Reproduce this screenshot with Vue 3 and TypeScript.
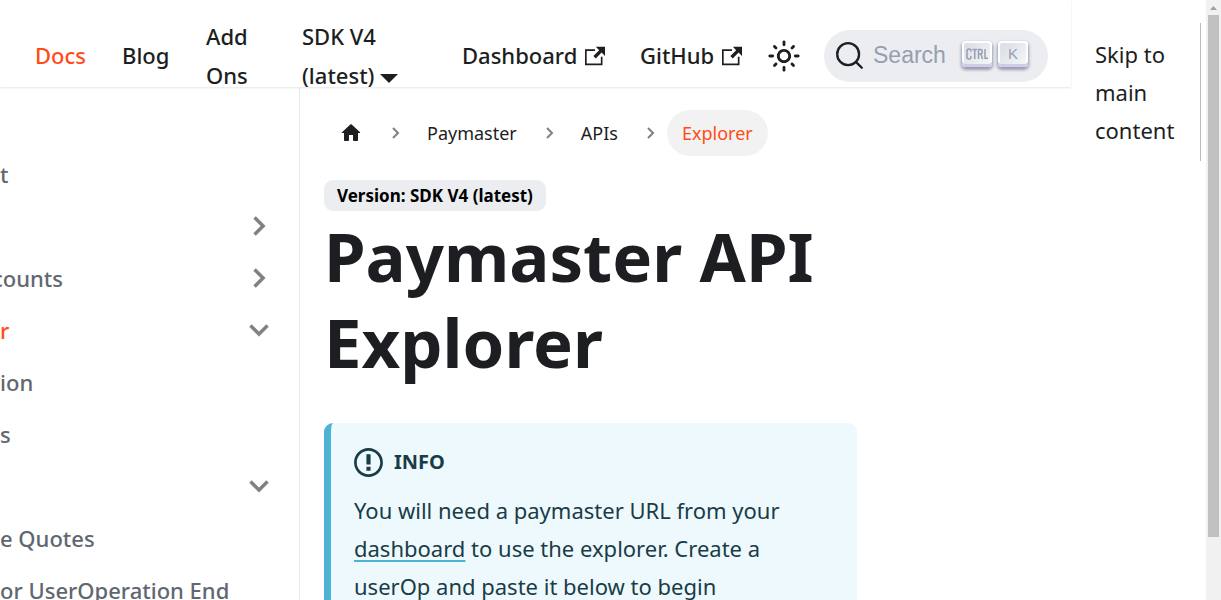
<script setup lang="ts">
interface SideItem {
  label: string
  chevron?: 'right' | 'down'
  active?: boolean
  clipped?: boolean
}

const sideItems: SideItem[] = [
  { label: 't' },
  { label: '', chevron: 'right' },
  { label: 'counts', chevron: 'right', clipped: true },
  { label: 'r', chevron: 'down', active: true },
  { label: 'ion' },
  { label: 's' },
  { label: '', chevron: 'down' },
  { label: 'e Quotes' },
  { label: 'or UserOperation End' },
]

const crumbs: string[] = ['Paymaster', 'APIs', 'Explorer']
</script>

<template>
  <div class="page">
    <div class="site">
      <nav class="navbar" aria-label="Main">
        <a href="#" class="active">Docs</a>
        <a href="#">Blog</a>
        <a href="#" class="narrow">Add Ons</a>
        <a href="#" class="version">SDK V4 (latest)<span class="caret"></span></a>
        <a href="#" class="external">Dashboard
          <svg width="20" height="20" viewBox="0 0 24 24" aria-hidden="true">
            <path fill="currentColor" d="M21 13v10h-21v-19h12v2h-10v15h17v-8h2zm3-12h-10.988l4.035 4-6.977 7.070 2.828 2.828 6.977-7.070 4.125 4.172v-11z" />
          </svg>
        </a>
        <a href="#" class="external">GitHub
          <svg width="20" height="20" viewBox="0 0 24 24" aria-hidden="true">
            <path fill="currentColor" d="M21 13v10h-21v-19h12v2h-10v15h17v-8h2zm3-12h-10.988l4.035 4-6.977 7.070 2.828 2.828 6.977-7.070 4.125 4.172v-11z" />
          </svg>
        </a>
        <button class="theme" type="button" aria-label="Switch theme">
          <svg width="34" height="34" viewBox="0 0 24 24" aria-hidden="true">
            <path fill="currentColor" d="M12,9c1.650,0,3,1.350,3,3s-1.350,3-3,3s-3-1.350-3-3S10.350,9,12,9 M12,7c-2.760,0-5,2.240-5,5s2.240,5,5,5s5-2.240,5-5S14.760,7,12,7L12,7z M2,13l2,0c0.550,0,1-0.450,1-1s-0.450-1-1-1l-2,0c-0.550,0-1,0.450-1,1S1.450,13,2,13z M20,13l2,0c0.550,0,1-0.450,1-1s-0.450-1-1-1l-2,0c-0.550,0-1,0.450-1,1S19.450,13,20,13z M11,2v2c0,0.550,0.450,1,1,1s1-0.450,1-1V2c0-0.550-0.450-1-1-1S11,1.450,11,2z M11,20v2c0,0.550,0.450,1,1,1s1-0.450,1-1v-2c0-0.550-0.450-1-1-1C11.450,19,11,19.450,11,20z M5.990,4.580c-0.390-0.390-1.030-0.390-1.410,0c-0.390,0.390-0.390,1.030,0,1.410l1.060,1.060c0.390,0.390,1.030,0.390,1.410,0s0.390-1.030,0-1.410L5.990,4.580z M18.360,16.950c-0.390-0.390-1.030-0.390-1.410,0c-0.390,0.390-0.390,1.030,0,1.410l1.060,1.060c0.390,0.390,1.030,0.390,1.410,0c0.390-0.390,0.390-1.030,0-1.410L18.360,16.950z M19.420,5.990c0.390-0.390,0.390-1.030,0-1.410c-0.390-0.390-1.030-0.390-1.410,0l-1.060,1.060c-0.390,0.390-0.390,1.030,0,1.410s1.030,0.390,1.410,0L19.420,5.990z M7.050,18.360c0.390-0.390,0.390-1.030,0-1.410c-0.390-0.390-1.030-0.390-1.410,0l-1.060,1.060c-0.390,0.390-0.390,1.030,0,1.410s1.030,0.390,1.410,0L7.050,18.360z" />
          </svg>
        </button>
        <button class="search" type="button">
          <svg width="29" height="29" viewBox="0 0 20 20" aria-hidden="true">
            <path d="M14.386 14.386l4.088 4.088-4.088-4.088c-2.942 2.942-7.711 2.942-10.653 0s-2.942-7.711 0-10.653 7.711-2.942 10.653 0 2.942 7.711 0 10.653z" fill="none" stroke="currentColor" stroke-width="1.6" stroke-linecap="round" stroke-linejoin="round" />
          </svg>
          <span class="placeholder">Search</span>
          <kbd class="ctrl"><svg width="24" height="20" viewBox="0 0 24 20" role="img" aria-label="Control"><path d="M6 7.500V7c0-2.700-4-2.700-4 0v6c0 2.700 4 2.700 4 0v-1M7.500 5.500H12M9.750 5.500V15M13.500 15V5.500H15.500c2.200 0 2.200 4.500 0 4.500h-2M16 10l1.500 5M20 5V14.300h3" fill="none" stroke="currentColor" stroke-width="1.5" /></svg></kbd>
          <kbd>K</kbd>
        </button>
      </nav>

      <div class="columns">
        <aside class="sidebar">
          <ul>
            <li v-for="(item, i) in sideItems" :key="i">
              <a href="#" :class="{ active: item.active, clipped: item.clipped }">{{ item.label }}</a>
              <svg v-if="item.chevron" :class="item.chevron" width="38" height="38" viewBox="0 0 24 24" aria-hidden="true">
                <path fill="currentColor" d="M7.410 15.410L12 10.830l4.590 4.580L18 14l-6-6-6 6z" stroke="currentColor" stroke-width="0.300" />
              </svg>
            </li>
          </ul>
        </aside>

        <main>
          <nav aria-label="Breadcrumbs" class="crumbs">
            <a href="#" class="home" aria-label="Home page">
              <svg width="24" height="24" viewBox="0 0 24 24" aria-hidden="true">
                <path fill="currentColor" d="M10 19v-5h4v5c0 .55.45 1 1 1h3c.55 0 1-.45 1-1v-7h1.700c.46 0 .68-.57.33-.87L12.670 3.600c-.38-.34-.96-.34-1.340 0l-8.360 7.530c-.34.300-.13.870.330.870H5v7c0 .55.45 1 1 1h3c.55 0 1-.45 1-1z" />
              </svg>
            </a>
            <template v-for="(crumb, i) in crumbs" :key="crumb">
              <svg class="sep" width="10" height="14" viewBox="0 0 10 14" aria-hidden="true">
                <path d="M2 2l5 5-5 5" fill="none" stroke="currentColor" stroke-width="2" />
              </svg>
              <a href="#" :class="{ current: i === crumbs.length - 1 }">{{ crumb }}</a>
            </template>
          </nav>
          <span class="badge">Version: SDK V4 (latest)</span>
          <h1>Paymaster API Explorer</h1>
          <section class="info">
            <h2>
              <svg width="29" height="33" viewBox="0 0 14 16" aria-hidden="true">
                <path fill="currentColor" fill-rule="evenodd" d="M7 2.300c3.140 0 5.700 2.560 5.700 5.700s-2.560 5.700-5.700 5.700A5.710 5.710 0 0 1 1.300 8c0-3.140 2.560-5.700 5.700-5.700zM7 1C3.140 1 0 4.140 0 8s3.140 7 7 7 7-3.140 7-7-3.140-7-7-7zm1 3H6v5h2V4zm0 6H6v2h2v-2z" />
              </svg>
              INFO
            </h2>
            <p>You will need a paymaster URL from your <a href="#">dashboard</a> to use the explorer. Create a userOp and paste it below to begin</p>
          </section>
        </main>
      </div>
    </div>

    <div class="skip"><a href="#">Skip to main content</a></div>
    <div class="scrollbar" aria-hidden="true">
      <svg width="15" height="15" viewBox="0 0 15 15"><path d="M4 10h7L7.500 6z" fill="#a0a0a0" /></svg>
      <div class="thumb"></div>
    </div>
  </div>
</template>

<style>
body {
  margin: 0;
  overflow: hidden;
  background: #fff;
}
</style>

<style scoped>
.page {
  display: flex;
  height: 100vh;
  overflow: hidden;
  color: #1c1e21;
  font-family: "Noto Sans", "Open Sans", sans-serif;
  font-size: 22px;
  line-height: 38px;
}
a {
  color: inherit;
  text-decoration: none;
}
.active {
  color: #ff4c18;
}
.site {
  flex: 1;
  min-width: 0;
}
.navbar {
  box-sizing: border-box;
  height: 87px;
  padding: 24px 23px 0 35px;
  display: grid;
  grid-template-columns: 87px 84px 96px 160px 178px 127px 57px 1fr;
  grid-auto-rows: 63px;
  align-items: center;
  box-shadow: 0 1px 2px rgba(0, 0, 0, 0.1);
  font-size: 22px;
  line-height: 39px;
  font-weight: 500;
}
.narrow {
  width: 60px;
}
.version {
  width: 110px;
}
.caret {
  display: inline-block;
  margin-left: 6px;
  border: 9px solid transparent;
  border-top-color: currentColor;
  border-bottom: 0;
  vertical-align: 1px;
}
.external {
  display: flex;
  align-items: center;
  gap: 8px;
  white-space: nowrap;
}
button {
  border: 0;
  padding: 0;
  font: inherit;
  color: inherit;
  background: none;
}
.theme {
  display: flex;
}
.search {
  justify-self: end;
  box-sizing: border-box;
  width: 224px;
  height: 52px;
  padding: 0 20px 0 11px;
  border-radius: 26px;
  background: #ebedf0;
  display: flex;
  align-items: center;
  font-family: "Liberation Sans", sans-serif;
  font-weight: 400;
}
.placeholder {
  margin: 0 auto 0 9px;
  color: #969faf;
  font-size: 23px;
}
kbd {
  width: 30px;
  height: 26px;
  margin: 0 0 4px 6px;
  border-radius: 4px;
  display: flex;
  align-items: center;
  justify-content: center;
  background: linear-gradient(-45deg, #f8f8f8, #d5dbe4);
  box-shadow: inset 0 -3px 0 #cdcde6, inset 0 0 1px 2px #fff, 0 2px 3px 1px rgba(30, 35, 90, 0.4);
  color: #969faf;
  font-family: "Liberation Sans", sans-serif;
  font-size: 15px;
  line-height: 20px;
}
.columns {
  display: flex;
}
.sidebar {
  flex: none;
  box-sizing: border-box;
  width: 300px;
  height: calc(100vh - 87px);
  border-right: 1px solid #e6e7e9;
  padding-top: 61px;
  overflow: hidden;
  color: #606770;
  font-weight: 500;
}
.clipped {
  margin-left: -8px;
}
ul {
  list-style: none;
  margin: 0;
  padding: 0 21px 0 0;
}
li {
  height: 52px;
  display: flex;
  align-items: center;
  white-space: nowrap;
}
li svg {
  margin-left: auto;
  color: #808080;
}
li svg.right {
  transform: rotate(90deg);
}
li svg.down {
  transform: rotate(180deg);
}
main {
  flex: none;
  box-sizing: border-box;
  width: 70%;
  max-width: 557px;
  padding: 23px 0 0 24px;
}
.crumbs {
  display: flex;
  align-items: center;
  height: 46px;
  font-size: 18px;
  white-space: nowrap;
}
.crumbs a {
  padding: 4px 15px;
  border-radius: 23px;
}
.crumbs .home {
  display: flex;
}
.crumbs .current {
  background: #f2f2f2;
  color: #ff4c18;
}
.sep {
  margin: 0 11px 0 13px;
  color: #808080;
}
.badge {
  display: table;
  margin-top: 24px;
  padding: 0 13px;
  border-radius: 9px;
  background: #ebedf0;
  color: #000;
  font-size: 17px;
  font-weight: 700;
  line-height: 31px;
}
h1 {
  margin: 2px 0 38px;
  font-size: 67px;
  line-height: 86px;
  font-weight: 700;
}
.info {
  height: 300px;
  padding: 20px 23px 0;
  border-left: 7px solid #4cb3d4;
  border-radius: 9px;
  background: #eef9fd;
  color: #193c47;
}
h2 {
  display: flex;
  align-items: center;
  gap: 11px;
  margin: 0 0 10px;
  font-size: 20px;
  font-weight: 700;
}
p {
  margin: 0;
}
p a {
  text-decoration: underline;
  text-decoration-color: #4cb3d4;
  text-decoration-thickness: 2px;
  text-underline-offset: 3px;
}
.skip {
  flex: none;
  box-sizing: border-box;
  width: 130px;
  height: 138px;
  margin: 23px 5px 0 0;
  padding: 12px 0 0 24px;
  border-right: 1px solid #bbb;
}
.skip a {
  display: block;
  width: 90px;
}
.scrollbar {
  flex: none;
  width: 15px;
  background: #f1f1f1;
}
.scrollbar svg {
  display: block;
}
.thumb {
  width: 11px;
  height: 87%;
  margin: 0 auto;
  background: #c1c1c1;
}
</style>
